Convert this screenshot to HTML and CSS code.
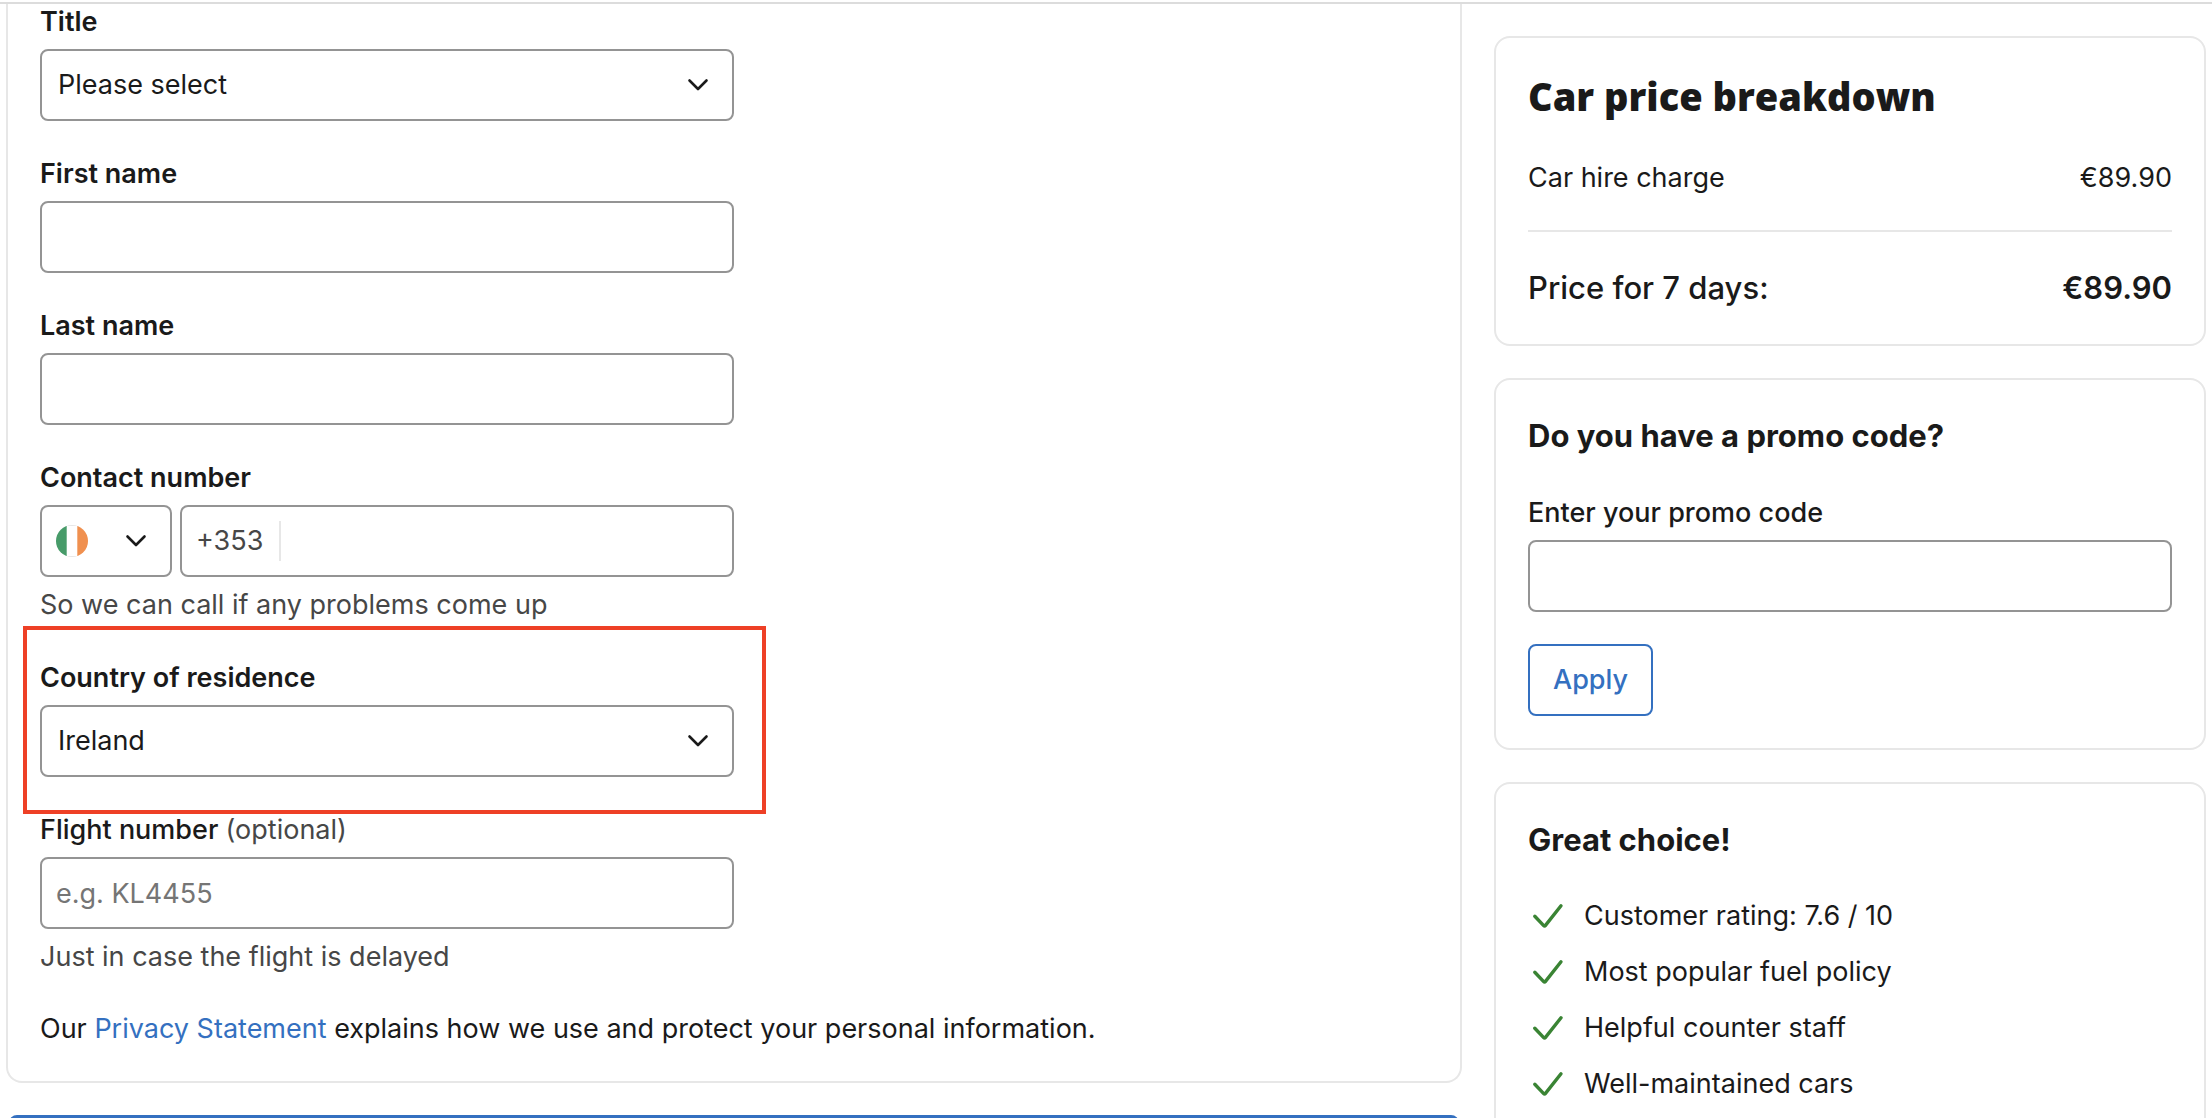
FILE: index.html
```html
<!DOCTYPE html>
<html lang="en">
<head>
<meta charset="utf-8">
<title>Driver details</title>
<link rel="stylesheet" href="styles.css">
</head>
<body>
<svg class="sprite" aria-hidden="true">
  <symbol id="chevron" viewBox="0 0 24 14"><path d="M3.500 2.500 12 11l8.500-8.500" fill="none" stroke="currentColor" stroke-width="2.600" stroke-linecap="round" stroke-linejoin="round"/></symbol>
  <symbol id="check" viewBox="0 0 40 40"><path d="M6.800 20.300l8.900 9.300c.500.500 1.200.500 1.600 0L33 9.800" fill="none" stroke="currentColor" stroke-width="3.400" stroke-linecap="round" stroke-linejoin="round"/></symbol>
</svg>
<div class="topline"></div>
<div class="layout">
  <main class="main">
    <form class="card card-details">
      <div class="fields">
        <div class="field">
          <label for="title">Title</label>
          <div class="select">
            <select id="title" class="control"><option>Please select</option></select>
            <svg class="chevron" aria-hidden="true"><use href="#chevron"/></svg>
          </div>
        </div>
        <div class="field">
          <label for="first">First name</label>
          <input id="first" class="control" type="text">
        </div>
        <div class="field">
          <label for="last">Last name</label>
          <input id="last" class="control" type="text">
        </div>
        <div class="field">
          <label for="phone">Contact number</label>
          <div class="phone">
            <div class="select select-flag">
              <select class="control" aria-label="Country code"><option value="IE"></option></select>
              <svg class="flag" viewBox="0 0 32 32" aria-hidden="true">
                <clipPath id="round"><circle cx="16" cy="16" r="16"/></clipPath>
                <g clip-path="url(#round)"><path fill="#fff" d="M0 0h32v32H0z"/><path fill="#479b69" d="M0 0h10.700v32H0z"/><path fill="#f0904f" d="M21.300 0H32v32H21.300z"/><path d="M10.700 .5h10.600M10.700 31.500h10.600" stroke="#e7e7e7"/></g>
              </svg>
              <svg class="chevron" aria-hidden="true"><use href="#chevron"/></svg>
            </div>
            <div class="control phone-box">
              <span class="prefix">+353</span>
              <input id="phone" type="tel">
            </div>
          </div>
          <p class="hint">So we can call if any problems come up</p>
        </div>
        <div class="field marked">
          <label for="country">Country of residence</label>
          <div class="select">
            <select id="country" class="control"><option>Ireland</option></select>
            <svg class="chevron" aria-hidden="true"><use href="#chevron"/></svg>
          </div>
        </div>
        <div class="field">
          <label class="label-light" for="flight">Flight number <span class="optional">(optional)</span></label>
          <input id="flight" class="control" type="text" placeholder="e.g. KL4455">
          <p class="hint">Just in case the flight is delayed</p>
        </div>
      </div>
      <p class="privacy">Our <a href="#">Privacy Statement</a> explains how we use and protect your personal information.</p>
    </form>
    <button class="submit" type="button" aria-label="Continue"></button>
  </main>
  <aside class="side">
    <section class="card">
      <h2 class="headline">Car price breakdown</h2>
      <div class="row"><span>Car hire charge</span><span>€89.90</span></div>
      <div class="row row-total"><span class="total-label">Price for 7 days:</span><strong>€89.90</strong></div>
    </section>
    <section class="card promo">
      <h3>Do you have a promo code?</h3>
      <div class="field field-wide">
        <label class="label-light" for="promo">Enter your promo code</label>
        <input id="promo" class="control" type="text">
      </div>
      <button class="apply" type="button">Apply</button>
    </section>
    <section class="card">
      <h3>Great choice!</h3>
      <ul class="perks">
        <li><svg aria-hidden="true"><use href="#check"/></svg>Customer rating: 7.6 / 10</li>
        <li><svg aria-hidden="true"><use href="#check"/></svg>Most popular fuel policy</li>
        <li><svg aria-hidden="true"><use href="#check"/></svg>Helpful counter staff</li>
        <li><svg aria-hidden="true"><use href="#check"/></svg>Well-maintained cars</li>
      </ul>
    </section>
  </aside>
</div>
</body>
</html>
```
FILE: styles.css
```css
* { box-sizing: border-box; }
body {
  margin: 0;
  height: 100vh;
  overflow: hidden;
  background: #fff;
  color: #1a1a1a;
  font: 400 27px/40px Inter, "Liberation Sans", sans-serif;
}
h2, h3, p, ul { margin: 0; padding: 0; }
input, select, button { font: inherit; color: inherit; }
a { color: #3470c0; text-decoration: none; }
.sprite { display: none; }
.topline { height: 4px; border-bottom: 2px solid #dcdcdc; }

.layout {
  display: grid;
  grid-template-columns: 1456fr 712fr;
  gap: 32px;
  padding: 0 6px;
}
.main, .side { display: flex; flex-direction: column; gap: 32px; min-width: 0; }
.side { padding-top: 32px; }
.card { border: 2px solid #e7e7e7; border-radius: 16px; padding: 32px; }
.card-details { border-top: 0; border-top-left-radius: 0; border-top-right-radius: 0; padding-top: 0; }

.fields { display: flex; flex-direction: column; gap: 35px; width: 50%; }
.field { display: flex; flex-direction: column; }
.field label { line-height: 36px; margin-bottom: 9px; font-weight: 600; }
.field .label-light { font-weight: 500; }
.optional { font-weight: 400; color: #474747; }
.control {
  width: 100%;
  height: 72px;
  padding: 0 14px;
  border: 2px solid #949494;
  border-radius: 8px;
  background: #fff;
  appearance: none;
}
.control::placeholder { color: #757575; opacity: 1; }
.select { position: relative; }
.select .control { padding: 0 16px; }
.chevron {
  position: absolute;
  right: 24px;
  top: 29px;
  width: 24px;
  height: 14px;
  pointer-events: none;
}
.phone { display: flex; gap: 8px; }
.select-flag { flex: 0 0 132px; }
.flag { position: absolute; left: 16px; top: 20px; width: 32px; height: 32px; pointer-events: none; }
.phone-box { display: flex; align-items: center; flex: 1; }
.prefix { padding-right: 16px; border-right: 2px solid #e7e7e7; color: #474747; }
.phone-box input { flex: 1; min-width: 0; border: 0; background: none; }
.hint { margin-top: 8px; color: #474747; }
.marked { position: relative; }
.marked::after {
  content: "";
  position: absolute;
  inset: -34px -32px -37px -17px;
  border: 4px solid #ee4026;
  pointer-events: none;
}
.privacy { margin-top: 32px; }
.submit { height: 96px; margin: 0 3px; border: 0; border-radius: 8px; background: #3470c0; }

.headline { font: 800 38px/52px "Open Sans", sans-serif; margin-bottom: 36px; }
.row { display: flex; justify-content: space-between; }
.row-total {
  margin-top: 32px;
  padding-top: 32px;
  border-top: 2px solid #e7e7e7;
  font-size: 31px;
  line-height: 48px;
}
.total-label { font-weight: 500; }
.row-total strong { font-weight: 600; }
h3 { font-size: 31px; line-height: 48px; font-weight: 700; }
.promo { display: flex; flex-direction: column; align-items: flex-start; }
.field-wide { width: 100%; margin: 35px 0 32px; }
.apply {
  height: 72px;
  padding: 0 23px;
  border: 2px solid #3470c0;
  border-radius: 8px;
  background: #fff;
  color: #3470c0;
  font-weight: 500;
}
.perks { list-style: none; margin-top: 32px; display: flex; flex-direction: column; gap: 16px; }
.perks li { display: flex; gap: 16px; }
.perks svg { width: 40px; height: 40px; color: #3a8434; }
```
